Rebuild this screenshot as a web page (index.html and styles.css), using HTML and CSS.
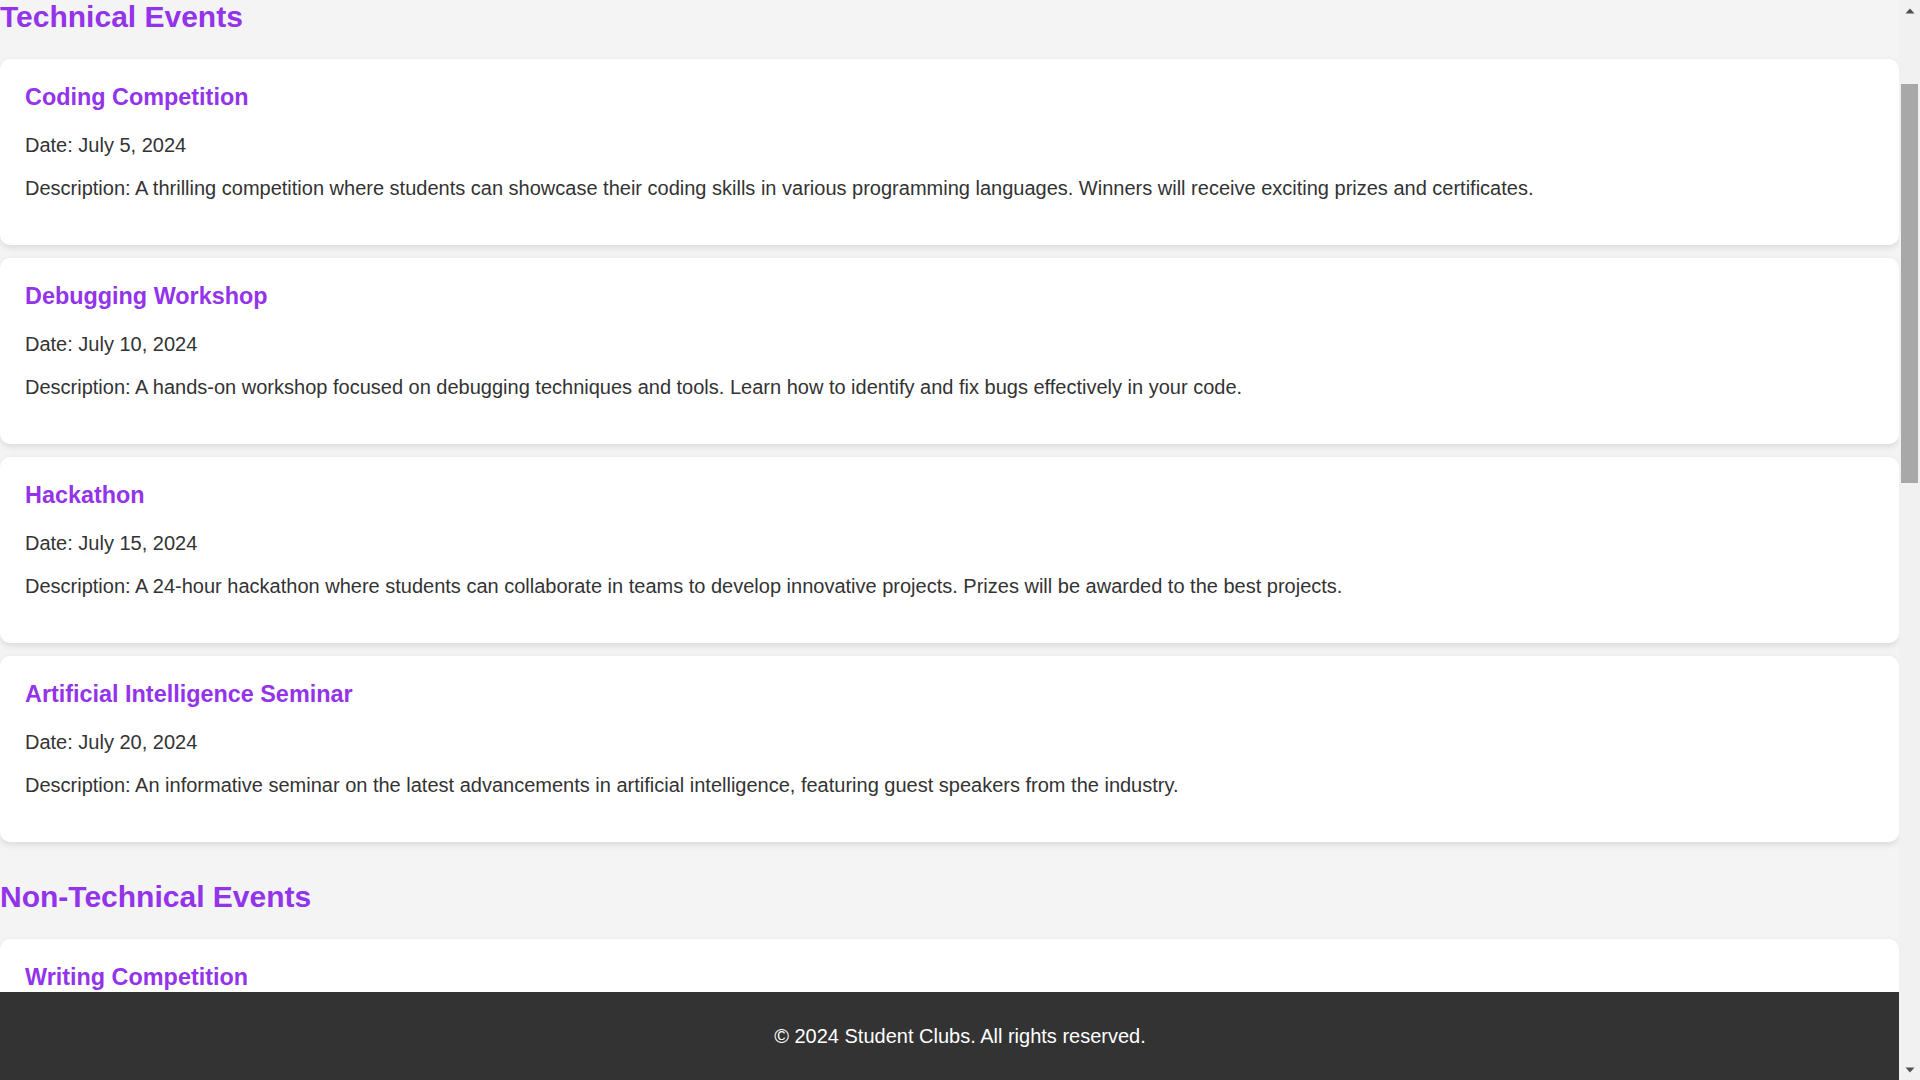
FILE: index.html
```html
<!DOCTYPE html>
<html lang="en">
<head>
<meta charset="utf-8">
<title>Student Clubs – Events</title>
<link rel="stylesheet" href="styles.css">
</head>
<body>
<div class="window">
  <div class="page">
    <main class="content">
      <section class="events">
        <h2 class="section-title first">Technical Events</h2>
        <div class="event-list">
          <article class="event-card">
            <h3>Coding Competition</h3>
            <p>Date: July 5, 2024</p>
            <p>Description: A thrilling competition where students can showcase their coding skills in various programming languages. Winners will receive exciting prizes and certificates.</p>
          </article>
          <article class="event-card">
            <h3>Debugging Workshop</h3>
            <p>Date: July 10, 2024</p>
            <p>Description: A hands-on workshop focused on debugging techniques and tools. Learn how to identify and fix bugs effectively in your code.</p>
          </article>
          <article class="event-card">
            <h3>Hackathon</h3>
            <p>Date: July 15, 2024</p>
            <p>Description: A 24-hour hackathon where students can collaborate in teams to develop innovative projects. Prizes will be awarded to the best projects.</p>
          </article>
          <article class="event-card">
            <h3>Artificial Intelligence Seminar</h3>
            <p>Date: July 20, 2024</p>
            <p>Description: An informative seminar on the latest advancements in artificial intelligence, featuring guest speakers from the industry.</p>
          </article>
        </div>
      </section>
      <section class="events">
        <h2 class="section-title">Non-Technical Events</h2>
        <div class="event-list">
          <article class="event-card">
            <h3>Writing Competition</h3>
          </article>
        </div>
      </section>
    </main>
    <footer class="site-footer">
      <p>&copy; 2024 Student Clubs. All rights reserved.</p>
    </footer>
  </div>
  <div class="scrollbar" aria-hidden="true">
    <div class="scroll-btn">
      <svg width="10" height="6" viewBox="0 0 10 6"><path d="M5 0.5 L9.5 5.5 L0.5 5.5 Z" fill="#505050"/></svg>
    </div>
    <div class="scroll-track"><div class="scroll-thumb"></div></div>
    <div class="scroll-btn">
      <svg width="10" height="6" viewBox="0 0 10 6"><path d="M0.5 0.5 L9.5 0.5 L5 5.5 Z" fill="#505050"/></svg>
    </div>
  </div>
</div>
</body>
</html>
```

FILE: styles.css
```css
html, body {
  margin: 0;
  padding: 0;
  height: 100%;
  overflow: hidden;
}

body {
  font-family: "Liberation Sans", Arial, sans-serif;
  font-size: 20px;
  color: #333333;
  background: #f4f4f4;
}

.window {
  display: flex;
  height: 100vh;
}

.page {
  flex: 1;
  position: relative;
  overflow: hidden;
  background: #f4f4f4;
}

.content {
  display: flex;
  flex-direction: column;
}

.section-title {
  font-size: 30px;
  font-weight: bold;
  color: #9333ea;
  margin: 25px 0;
}

.section-title.first {
  margin-top: 0;
}

.event-list {
  display: flex;
  flex-direction: column;
}

.event-card {
  background: #ffffff;
  border-radius: 10px;
  padding: 25px;
  margin-bottom: 12.5px;
  box-shadow: 0 2.5px 6px rgba(0, 0, 0, 0.1);
}

.event-card h3 {
  font-size: 23.4px;
  font-weight: bold;
  color: #9333ea;
  margin: 0 0 23.4px;
}

.event-card p {
  margin: 20px 0;
}

.site-footer {
  position: absolute;
  left: 0;
  bottom: 0;
  width: 100vw;
  background: #333333;
  color: #ffffff;
  text-align: center;
  padding: 12.5px 0;
}

.site-footer p {
  margin: 20px 0;
}

.scrollbar {
  width: 21px;
  flex: none;
  display: flex;
  flex-direction: column;
  background: #f1f1f1;
}

.scroll-btn {
  height: 21px;
  display: flex;
  align-items: center;
  justify-content: center;
}

.scroll-track {
  flex: 1;
  padding: 0 2px;
}

.scroll-thumb {
  margin-top: 63px;
  height: 399px;
  background: #a8a8a8;
}
```
